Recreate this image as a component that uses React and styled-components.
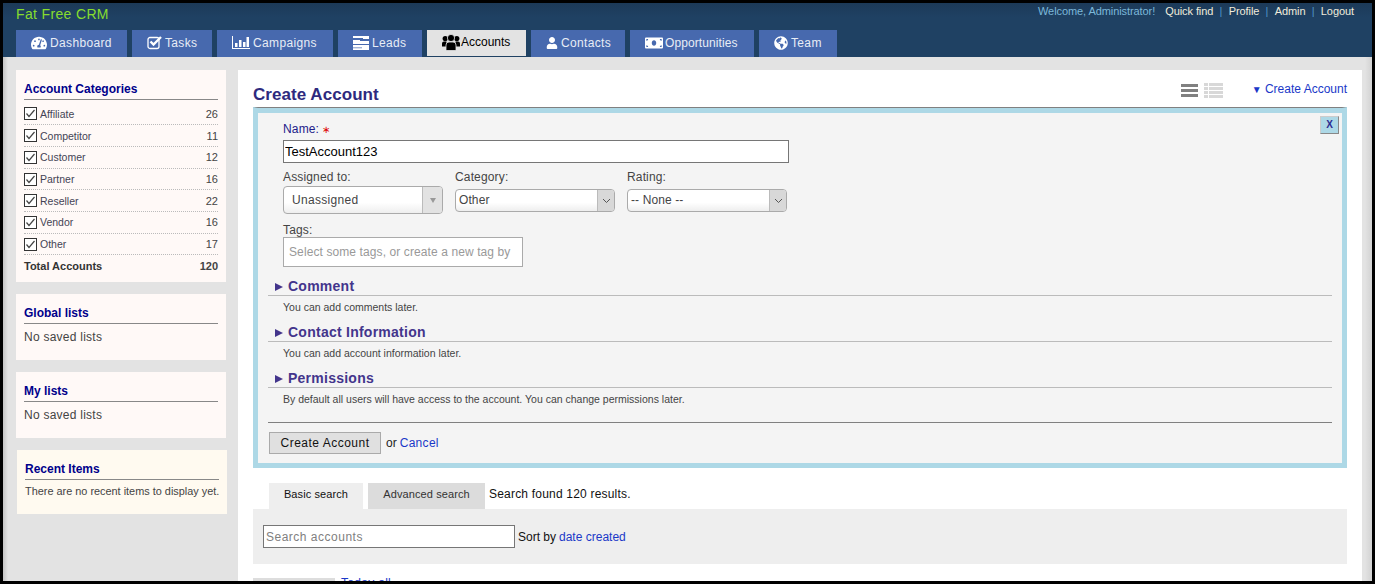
import React from "react";
import styled, { createGlobalStyle } from "styled-components";
import { FaTachometerAlt, FaUser, FaMoneyBill, FaGlobeAmericas } from "react-icons/fa";

const GlobalStyle = createGlobalStyle`
  html, body { margin: 0; padding: 0; height: 100%; overflow: hidden; background: #000; }
  body { font-family: "Liberation Sans", Arial, sans-serif; font-size: 12px; color: #333; }
  #root { height: 100%; }
  a { color: #1a38c8; text-decoration: none; }
`;

const Frame = styled.div`
  width: 1375px;
  height: 584px;
  box-sizing: border-box;
  border: 3px solid #000;
  background: #e3e3e3;
  overflow: hidden;
  display: flex;
  flex-direction: column;
`;

const Header = styled.header`
  flex: none;
  position: relative;
  z-index: 1;
  height: 54px;
  background: linear-gradient(#1c3a58 0, #1f4163 14px, #1f4163 100%);
  padding: 0 13px;
  display: flex;
  flex-direction: column;
`;

const TopRow = styled.div`
  height: 28px;
  display: flex;
  justify-content: space-between;
`;

const Brand = styled.div`
  color: #86dc2e;
  font-size: 14px;
  letter-spacing: 0.35px;
  line-height: 22px;
`;

const UserLinks = styled.div`
  font-size: 11px;
  letter-spacing: -0.08px;
  line-height: 17px;
  padding-right: 5px;
  display: flex;
`;

const Welcome = styled.span`
  margin-right: 10px;
  color: #7cb8da;
`;

const TopLink = styled.span`
  color: #f0ecdc;
`;

const Pipe = styled.span`
  margin: 0 6.3px;
  color: #4f93c6;
`;

const Tabs = styled.nav`
  display: flex;
  gap: 5px;
`;

const Tab = styled.div`
  width: ${(p) => p.$w}px;
  height: ${(p) => (p.$active ? 26 : 27)}px;
  padding: 0 0 2px 15px;
  box-sizing: border-box;
  display: flex;
  align-items: center;
  gap: ${(p) => p.$gap ?? 3}px;
  font-size: 12px;
  letter-spacing: ${(p) => p.$ls ?? 0.35}px;
  color: ${(p) => (p.$active ? "#000" : "#e8edf6")};
  background: ${(p) => (p.$active ? "#e3e3e3" : "#4769ae")};
  svg { flex: none; color: ${(p) => (p.$active ? "#000" : "#fff")}; }
`;

const Body = styled.div`
  flex: 1;
  min-height: 0;
  display: flex;
  align-items: flex-start;
  padding: 13px 10px 0 13px;
  gap: 12px;
  background: linear-gradient(90deg, #c4c4c4 0, #e3e3e3 5px, #e3e3e3 calc(100% - 7px), #d2d2d2 100%);
`;

const Sidebar = styled.aside`
  width: 210px;
  flex: none;
  display: flex;
  flex-direction: column;
  gap: 12px;
`;

const Panel = styled.section`
  background: ${(p) => (p.$cream ? "#fffaf0" : "#fff9f7")};
  padding: 11px 8px ${(p) => p.$pb || 16}px;
  margin-left: ${(p) => (p.$cream ? 1 : 0)}px;
  margin-right: ${(p) => (p.$cream ? -1 : 0)}px;
`;

const PanelTitle = styled.div`
  color: #00008b;
  font-weight: bold;
  font-size: 12px;
  line-height: 16px;
  padding-bottom: 2px;
  border-bottom: 1px solid #888;
`;

const PanelText = styled.div`
  font-size: ${(p) => p.$size || 12}px;
  line-height: 14px;
  padding-top: ${(p) => p.$pt || 6}px;
  color: #444;
  letter-spacing: ${(p) => (p.$size ? 0 : 0.25)}px;
  white-space: nowrap;
`;

const CatList = styled.div`
  padding-top: 3.6px;
`;

const CatRow = styled.div`
  display: flex;
  align-items: center;
  height: 21.7px;
  border-bottom: ${(p) => (p.$plain ? "none" : "1px dotted #bbb")};
  box-sizing: border-box;
  font-size: ${(p) => (p.$plain ? 11 : 10.5)}px;
  font-weight: ${(p) => (p.$plain ? "bold" : "normal")};
  color: ${(p) => (p.$plain ? "#333" : "#445")};
`;

const CheckBox = styled.svg`
  width: 13px;
  height: 13px;
  margin-right: 3px;
  flex: none;
`;

const Count = styled.span`
  margin-left: auto;
  color: #444;
  font-size: 11px;
`;

const Main = styled.main`
  flex: 1;
  min-width: 0;
  height: 520px;
  background: #fff;
  padding: 0 15px;
`;

const TitleRow = styled.div`
  display: flex;
  align-items: flex-start;
  height: 37px;
`;

const Title = styled.h1`
  margin: 16px 0 0;
  color: #2e2a7e;
  font-size: 17px;
  letter-spacing: 0.05px;
  line-height: 18px;
  font-weight: bold;
`;

const Views = styled.div`
  margin-left: auto;
  margin-top: 13px;
  display: flex;
  gap: 4px;
`;

const CreateLink = styled.a`
  margin: 12px 0 0 29px;
  font-size: 12px;
  line-height: 14px;
`;

const SmallArrow = styled.span`
  font-size: 10px;
`;

const CreateBox = styled.div`
  position: relative;
  border-top: 1px solid #808080;
  background: #f4f4f4;
  border-left: 5px solid #add8e6;
  border-right: 5px solid #add8e6;
  border-bottom: 5px solid #add8e6;
  box-shadow: inset 0 5px 0 #add8e6;
  padding: 14px 10px 0;
  height: 361px;
  box-sizing: border-box;
`;

const CloseButton = styled.div`
  position: absolute;
  top: 8px;
  right: 3px;
  width: 19px;
  height: 18px;
  background: #add8e6;
  border: 1px solid #ccc;
  border-right-color: #888;
  border-bottom-color: #888;
  box-sizing: border-box;
  color: #2a2a90;
  font-size: 10px;
  font-weight: bold;
  text-align: center;
  line-height: 16px;
`;

const Fields = styled.div`
  padding-left: 15px;
  width: 506px;
`;

const Label = styled.label`
  display: block;
  font-size: 12px;
  letter-spacing: 0.15px;
  line-height: 14px;
  margin-top: ${(p) => p.$mt || 0}px;
  color: ${(p) => p.$color || "#444"};
`;

const Star = styled.span`
  color: #d00;
  font-size: 10px;
  margin-left: 3px;
`;

const NameInput = styled.input`
  display: block;
  width: 100%;
  height: 23px;
  box-sizing: border-box;
  margin: 3px 0 5px;
  padding: 0 1px;
  border: 1px solid #767676;
  background: #fff;
  font: 13px "Liberation Sans", Arial, sans-serif;
  color: #000;
`;

const SelectRow = styled.div`
  display: flex;
  gap: 12px;
  margin-top: 7px;
`;

const SelectCol = styled.div`
  width: 160px;
`;

const SelectBox = styled.div`
  margin-top: ${(p) => (p.$tall ? 2 : 5)}px;
  height: ${(p) => (p.$tall ? 28 : 23)}px;
  box-sizing: border-box;
  border: 1px solid #aaa;
  border-radius: 4px;
  background: linear-gradient(#fff 60%, #eee);
  display: flex;
  align-items: center;
  padding-left: ${(p) => (p.$tall ? 8 : 3)}px;
  font-size: 12px;
  line-height: 13px;
  color: #444;
  letter-spacing: ${(p) => (p.$tall ? 0.3 : 0.1)}px;
`;

const SelectValue = styled.span`
  margin-bottom: 1px;
`;

const SelectArrow = styled.div`
  margin-left: auto;
  width: ${(p) => (p.$tall ? 19 : 16)}px;
  height: 100%;
  background: ${(p) => (p.$tall ? "#e2e2e2" : "#d8d8d8")};
  border-left: 1px solid #bbb;
  border-radius: 0 3px 3px 0;
  display: flex;
  align-items: center;
  justify-content: center;
  flex: none;
`;

const GrayCaret = styled.span`
  width: 0;
  height: 0;
  border-left: 3px solid transparent;
  border-right: 3px solid transparent;
  border-top: 5px solid #999;
`;

const TagsBox = styled.div`
  width: 240px;
  height: 30px;
  box-sizing: border-box;
  border: 1px solid #aaa;
  background: #fff;
  padding: 0 5px;
  line-height: 28px;
  font-size: 12px;
  letter-spacing: 0.1px;
  color: #999;
  white-space: nowrap;
  overflow: hidden;
`;

const Section = styled.div`
  margin-top: ${(p) => p.$mt || 8}px;
`;

const SectionHead = styled.div`
  display: flex;
  align-items: center;
  height: 18px;
  border-bottom: 1px solid #bbb;
  color: #43358c;
  font-size: 14px;
  letter-spacing: 0.25px;
  font-weight: bold;
  padding-left: 7px;
  gap: 5px;
`;

const SectionCaret = styled.span`
  width: 0;
  height: 0;
  margin-top: 2px;
  border-top: 4px solid transparent;
  border-bottom: 4px solid transparent;
  border-left: 8px solid #43358c;
`;

const SectionNote = styled.div`
  box-sizing: border-box;
  padding: 6px 0 0 15px;
  font-size: 10.5px;
  line-height: 11px;
  color: #444;
  height: 19px;
`;

const Actions = styled.div`
  margin-top: 15px;
  border-top: 1px solid #808080;
  padding-top: 9px;
  display: flex;
  align-items: center;
  font-size: 12px;
  color: #222;
  gap: 5px;
`;

const SubmitButton = styled.div`
  margin-left: 1px;
  width: 112px;
  height: 22px;
  box-sizing: border-box;
  background: #e0e0e0;
  border: 1px solid #aaa;
  text-align: center;
  line-height: 20px;
  color: #111;
  letter-spacing: 0.5px;
`;

const CancelLink = styled.a`
  margin-left: 3px;
  letter-spacing: 0.3px;
`;

const SearchTabs = styled.div`
  margin-top: 15px;
  padding-left: 16px;
  display: flex;
  gap: 5px;
  height: 26px;
`;

const SearchTab = styled.div`
  width: ${(p) => p.$w}px;
  background: ${(p) => (p.$on ? "#eee" : "#dcdcdc")};
  font-size: 11px;
  letter-spacing: 0.1px;
  line-height: 22px;
  text-align: center;
  color: ${(p) => (p.$on ? "#111" : "#333")};
`;

const Found = styled.div`
  margin-left: -1px;
  font-size: 12px;
  letter-spacing: 0.2px;
  line-height: 23px;
  color: #111;
`;

const SearchBar = styled.div`
  height: 55px;
  background: #eee;
  padding-left: 10px;
  display: flex;
  align-items: center;
  gap: 3px;
  font-size: 12px;
  color: #111;
`;

const SearchInput = styled.input`
  width: 252px;
  height: 23px;
  box-sizing: border-box;
  border: 1px solid #767676;
  padding: 0 2px;
  font: 12px "Liberation Sans", Arial, sans-serif;
  letter-spacing: 0.5px;
  &::placeholder { color: #808080; opacity: 1; }
`;

const BottomRow = styled.div`
  margin-top: 14px;
  display: flex;
  gap: 6px;
`;

const BottomTab = styled.div`
  width: 82px;
  height: 10px;
  background: #ddd;
`;

const BottomLink = styled.a`
  font-size: 12px;
  line-height: 14px;
  margin-top: -2px;
  letter-spacing: 0.3px;
`;

const categories = [
  ["Affiliate", 26],
  ["Competitor", 11],
  ["Customer", 12],
  ["Partner", 16],
  ["Reseller", 22],
  ["Vendor", 16],
  ["Other", 17],
];

const Check = () => (
  <CheckBox viewBox="0 0 13 13">
    <rect x="0.5" y="0.5" width="12" height="12" fill="#fff" stroke="#333" />
    <path d="M2.5 6.5 L5 9.5 L10.5 3" fill="none" stroke="#444" strokeWidth="1.2" />
  </CheckBox>
);

const TasksIcon = () => (
  <svg width="15" height="15" viewBox="0 0 15 15">
    <rect x="1" y="2.5" width="11" height="11" rx="2" fill="none" stroke="#fff" strokeWidth="1.3" />
    <path d="M3.5 6.5l3 3L14 2" fill="none" stroke="#fff" strokeWidth="2.4" />
  </svg>
);

const CampaignsIcon = () => (
  <svg width="18" height="15" viewBox="0 0 18 15">
    <path d="M0 1h1v12h17v1H0z" fill="#fff" />
    <path d="M3 8h2.5v4H3zM7 5h2.5v7H7zM11 7h2.5v5H11zM14.5 2H17v10h-2.5z" fill="#fff" />
  </svg>
);

const LeadsIcon = () => (
  <svg width="16" height="14" viewBox="0 0 16 14">
    <path d="M0 0h16v3H10v-1H0zM0 4h7v1h9v3H0zM0 9h16v5H0z" fill="#fff" />
    <path d="M0 11.5h9v.7H0z" fill="#4769ae" />
  </svg>
);

const UsersIcon = () => (
  <svg width="18" height="17" viewBox="0 0 18 17">
    <circle cx="3.2" cy="4.6" r="2.6" fill="#000" />
    <circle cx="14.8" cy="4.6" r="2.6" fill="#000" />
    <path d="M0 12.5V9.5q0-2 2-2h2.5v5zM18 12.5V9.5q0-2-2-2h-2.5v5z" fill="#000" />
    <circle cx="9" cy="4" r="3.6" fill="#000" stroke="#e3e3e3" strokeWidth="0.8" />
    <path d="M4 16.5V11q0-3 3-3h4q3 0 3 3v5.5z" fill="#000" stroke="#e3e3e3" strokeWidth="0.8" />
  </svg>
);

const ListView = ({ color, dense }) => (
  <svg width="19" height="15" viewBox="0 0 19 15">
    {dense
      ? [0, 4, 8, 12].map((y) => <path key={y} d="M0 0h4v3H0zM5 0h14v3H5z" transform={`translate(0 ${y})`} fill={color} />)
      : [1, 6, 11].map((y) => <path key={y} d="M0 0h17v3H0z" transform={`translate(0 ${y})`} fill={color} />)}
  </svg>
);

const Chevron = () => (
  <svg width="9" height="6" viewBox="0 0 9 6">
    <path d="M1 1l3.5 3.5L8 1" fill="none" stroke="#555" />
  </svg>
);

export default function App() {
  return (
    <Frame>
      <GlobalStyle />
      <Header>
        <TopRow>
          <Brand>Fat Free CRM</Brand>
          <UserLinks>
            <Welcome>Welcome, Administrator!</Welcome>
            <TopLink>Quick find</TopLink><Pipe>|</Pipe>
            <TopLink>Profile</TopLink><Pipe>|</Pipe>
            <TopLink>Admin</TopLink><Pipe>|</Pipe>
            <TopLink>Logout</TopLink>
          </UserLinks>
        </TopRow>
        <Tabs>
          <Tab $w={111}><FaTachometerAlt size={16} />Dashboard</Tab>
          <Tab $w={80}><TasksIcon />Tasks</Tab>
          <Tab $w={116}><CampaignsIcon />Campaigns</Tab>
          <Tab $w={84}><LeadsIcon />Leads</Tab>
          <Tab $w={99} $active $ls={0} $gap={1}><UsersIcon />Accounts</Tab>
          <Tab $w={94}><FaUser size={12} />Contacts</Tab>
          <Tab $w={124} $ls={0.1} $gap={2}><FaMoneyBill size={18} />Opportunities</Tab>
          <Tab $w={78}><FaGlobeAmericas size={14} />Team</Tab>
        </Tabs>
      </Header>
      <Body>
        <Sidebar>
          <Panel $pb={5}>
            <PanelTitle>Account Categories</PanelTitle>
            <CatList>
              {categories.map(([name, count]) => (
                <CatRow key={name}>
                  <Check />
                  {name}
                  <Count>{count}</Count>
                </CatRow>
              ))}
              <CatRow $plain>
                Total Accounts
                <Count>120</Count>
              </CatRow>
            </CatList>
          </Panel>
          <Panel>
            <PanelTitle>Global lists</PanelTitle>
            <PanelText>No saved lists</PanelText>
          </Panel>
          <Panel>
            <PanelTitle>My lists</PanelTitle>
            <PanelText>No saved lists</PanelText>
          </Panel>
          <Panel $cream>
            <PanelTitle>Recent Items</PanelTitle>
            <PanelText $size={10.9} $pt={4}>There are no recent items to display yet.</PanelText>
          </Panel>
        </Sidebar>
        <Main>
          <TitleRow>
            <Title>Create Account</Title>
            <Views>
              <ListView color="#808080" />
              <ListView color="#d8d8d8" dense />
            </Views>
            <CreateLink href="#"><SmallArrow>▼</SmallArrow> Create Account</CreateLink>
          </TitleRow>
          <CreateBox>
            <CloseButton>X</CloseButton>
            <Fields>
              <Label $color="#22208a">Name:<Star>∗</Star></Label>
              <NameInput defaultValue="TestAccount123" />
              <SelectRow>
                <SelectCol>
                  <Label>Assigned to:</Label>
                  <SelectBox $tall>
                    Unassigned
                    <SelectArrow $tall><GrayCaret /></SelectArrow>
                  </SelectBox>
                </SelectCol>
                <SelectCol>
                  <Label>Category:</Label>
                  <SelectBox>
                    <SelectValue>Other</SelectValue>
                    <SelectArrow><Chevron /></SelectArrow>
                  </SelectBox>
                </SelectCol>
                <SelectCol>
                  <Label>Rating:</Label>
                  <SelectBox>
                    <SelectValue>-- None --</SelectValue>
                    <SelectArrow><Chevron /></SelectArrow>
                  </SelectBox>
                </SelectCol>
              </SelectRow>
              <Label $mt={9}>Tags:</Label>
              <TagsBox>Select some tags, or create a new tag by</TagsBox>
            </Fields>
            <Section $mt={10}>
              <SectionHead><SectionCaret />Comment</SectionHead>
              <SectionNote>You can add comments later.</SectionNote>
            </Section>
            <Section>
              <SectionHead><SectionCaret />Contact Information</SectionHead>
              <SectionNote>You can add account information later.</SectionNote>
            </Section>
            <Section>
              <SectionHead><SectionCaret />Permissions</SectionHead>
              <SectionNote>By default all users will have access to the account. You can change permissions later.</SectionNote>
            </Section>
            <Actions>
              <SubmitButton>Create Account</SubmitButton>
              <span>or<CancelLink href="#">Cancel</CancelLink></span>
            </Actions>
          </CreateBox>
          <SearchTabs>
            <SearchTab $on $w={94}>Basic search</SearchTab>
            <SearchTab $w={117}>Advanced search</SearchTab>
            <Found>Search found 120 results.</Found>
          </SearchTabs>
          <SearchBar>
            <SearchInput placeholder="Search accounts" />
            Sort by <a href="#">date created</a>
          </SearchBar>
          <BottomRow>
            <BottomTab />
            <BottomLink href="#">Today all</BottomLink>
          </BottomRow>
        </Main>
      </Body>
    </Frame>
  );
}
